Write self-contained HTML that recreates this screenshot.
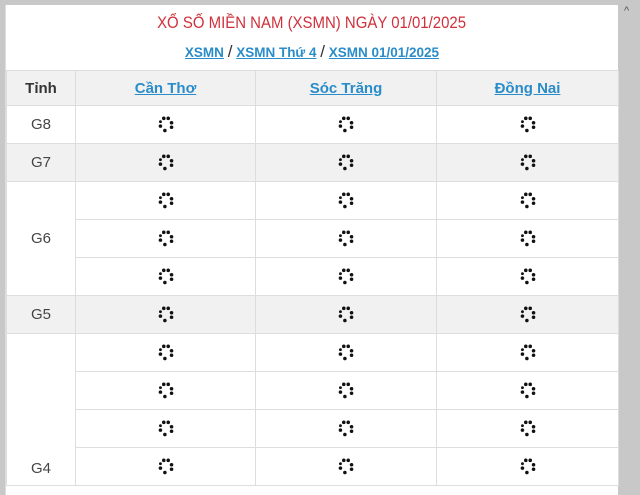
<!DOCTYPE html>
<html><head><meta charset="utf-8"><style>
body{margin:0;width:640px;height:485px;overflow:hidden;background:#c8c8c8;font-family:"Liberation Sans",sans-serif;position:relative}
.box{position:absolute;left:5px;top:5px;width:612px;height:490px;background:#fff;border-left:1px solid #ddd}
.title{position:absolute;top:8px;left:0;width:612px;text-align:center;color:#d0303a;font-size:17px}
.title span{display:inline-block;transform:scaleX(0.88)}
.crumb{position:absolute;top:37px;left:0;width:612px;text-align:center;font-size:13.5px;font-weight:bold;color:#333}
.crumb a{color:#2a8cc8;text-decoration:underline}
table{position:absolute;top:65px;left:0;border-collapse:collapse;width:612px;table-layout:fixed}
td{border:1px solid #ddd;height:37px;text-align:center;padding:0;font-size:15px;color:#333}
.h td{background:#f1f1f1;height:34px;font-weight:bold;font-size:15px}
.h a{color:#2a8cc8;text-decoration:underline}
td.l{background:#f1f1f1;color:#444}
tr.g td{background:#f1f1f1}
.sp{display:inline-block;width:20px;height:20px;vertical-align:middle}
.arr{position:absolute;left:624px;top:5px;color:#555;font-size:11px}
</style></head><body>
<div class="box">
<div class="title"><span>XỔ SỐ MIỀN NAM (XSMN) NGÀY 01/01/2025</span></div>
<div class="crumb"><a>XSMN</a> <span style="font-weight:normal;font-size:17px">/</span> <a>XSMN Thứ 4</a> <span style="font-weight:normal;font-size:17px">/</span> <a>XSMN 01/01/2025</a></div>
<table>
<colgroup><col style="width:69px"><col style="width:180px"><col style="width:181px"><col style="width:182px"></colgroup>
<tr class="h"><td>Tỉnh</td><td><a>Cần Thơ</a></td><td><a>Sóc Trăng</a></td><td><a>Đồng Nai</a></td></tr>
<tr><td class="l" style="background:#fff">G8</td><td>S</td><td>S</td><td>S</td></tr>
<tr class="g"><td class="l">G7</td><td>S</td><td>S</td><td>S</td></tr>
<tr><td class="l" rowspan="3" style="background:#fff">G6</td><td>S</td><td>S</td><td>S</td></tr>
<tr><td>S</td><td>S</td><td>S</td></tr>
<tr><td>S</td><td>S</td><td>S</td></tr>
<tr class="g"><td class="l">G5</td><td>S</td><td>S</td><td>S</td></tr>
<tr><td class="l" rowspan="4" style="background:#fff;vertical-align:bottom;padding-bottom:8px">G4</td><td>S</td><td>S</td><td>S</td></tr>
<tr><td>S</td><td>S</td><td>S</td></tr>
<tr><td>S</td><td>S</td><td>S</td></tr>
<tr><td>S</td><td>S</td><td>S</td></tr>
</table>
</div>
<div class="arr">^</div>
<script>
var svg='<svg class="sp" viewBox="0 0 18 18"><g fill="#111"><circle cx="7" cy="3" r="1.6"/><circle cx="11" cy="3" r="1.6"/><circle cx="14" cy="7" r="1.6"/><circle cx="14" cy="11" r="1.6"/><circle cx="4" cy="10" r="1.6"/><circle cx="8" cy="14" r="1.6"/><circle cx="4" cy="6" r="1.3"/></g></svg>';
document.querySelectorAll('td').forEach(function(t){if(t.textContent==='S')t.innerHTML=svg;});
</script>
</body></html>
